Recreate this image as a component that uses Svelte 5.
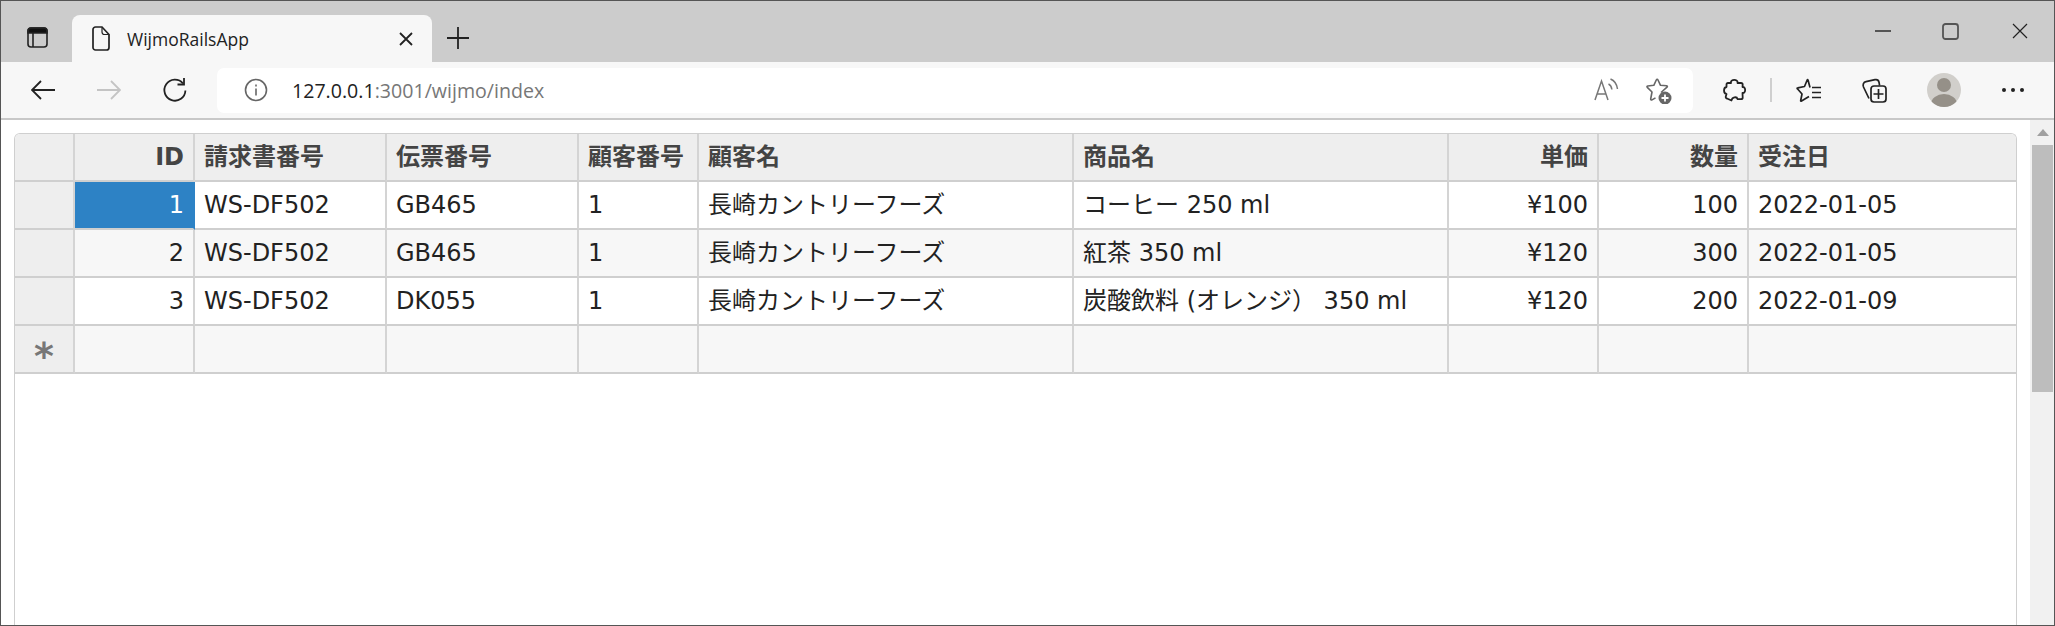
<script>
  const columns = [
    { key: "id", label: "ID", w: 120, right: true },
    { key: "invoice", label: "請求書番号", w: 192 },
    { key: "slip", label: "伝票番号", w: 192 },
    { key: "custNo", label: "顧客番号", w: 120 },
    { key: "cust", label: "顧客名", w: 375 },
    { key: "item", label: "商品名", w: 375 },
    { key: "price", label: "単価", w: 150, right: true },
    { key: "qty", label: "数量", w: 150, right: true },
    { key: "date", label: "受注日", w: 269 },
  ]

  const rows = [
    { id: "1", invoice: "WS-DF502", slip: "GB465", custNo: "1", cust: "長崎カントリーフーズ", item: "コーヒー 250 ml", price: "¥100", qty: "100", date: "2022-01-05" },
    { id: "2", invoice: "WS-DF502", slip: "GB465", custNo: "1", cust: "長崎カントリーフーズ", item: "紅茶 350 ml", price: "¥120", qty: "300", date: "2022-01-05" },
    { id: "3", invoice: "WS-DF502", slip: "DK055", custNo: "1", cust: "長崎カントリーフーズ", item: "炭酸飲料 (オレンジ） 350 ml", price: "¥120", qty: "200", date: "2022-01-09" },
  ]

  const template = "60px " + columns.map((c) => c.w + "px").join(" ")
</script>

<div class="window">
  <div class="tabstrip">
    <svg class="tabs-icon" width="21" height="21" viewBox="0 0 21 21" fill="none" stroke="#222" stroke-width="1.6">
      <path d="M1 6V4a3 3 0 0 1 3-3h13a3 3 0 0 1 3 3v2z" fill="#111" />
      <rect x="1" y="1" width="19" height="19" rx="3" />
      <path d="M6 6v14" />
    </svg>
    <div class="tab">
      <svg width="18" height="25" viewBox="0 0 18 25" fill="none" stroke="#222" stroke-width="1.7">
        <path d="M3.500 1h6.500l7 7.500V21.500a2.500 2.500 0 0 1-2.500 2.500h-11A2.500 2.500 0 0 1 1 21.500V3.500A2.500 2.500 0 0 1 3.500 1z" />
        <path d="M10 1.500V6a2.500 2.500 0 0 0 2.500 2.500H16.500" stroke-width="1.2" />
      </svg>
      <span class="tab-title">WijmoRailsApp</span>
      <svg class="tab-close" width="14" height="14" viewBox="0 0 14 14" stroke="#222" stroke-width="1.8">
        <path d="M1 1l12 12M13 1L1 13" />
      </svg>
    </div>
    <svg class="new-tab" width="22" height="22" viewBox="0 0 22 22" stroke="#222" stroke-width="1.8">
      <path d="M11 0v22M0 11h22" />
    </svg>
    <div class="caption">
      <svg width="16" height="2" viewBox="0 0 16 2" stroke="#222" stroke-width="1.4"><path d="M0 1h16" /></svg>
      <svg class="cap-max" width="17" height="17" viewBox="0 0 17 17" fill="none" stroke="#555" stroke-width="1.8"><rect x="1" y="1" width="15" height="15" rx="2.500" /></svg>
      <svg class="cap-close" width="16" height="16" viewBox="0 0 16 16" stroke="#222" stroke-width="1.2"><path d="M1 1l14 14M15 1L1 15" /></svg>
    </div>
  </div>

  <div class="toolbar">
    <svg class="back" width="24" height="20" viewBox="0 0 24 20" fill="none" stroke="#222" stroke-width="1.8">
      <path d="M24 10H1M10 1l-9 9 9 9" />
    </svg>
    <svg class="forward" width="24" height="20" viewBox="0 0 24 20" fill="none" stroke="#c4c4c4" stroke-width="1.8">
      <path d="M0 10h23M14 1l9 9-9 9" />
    </svg>
    <svg class="reload" width="25" height="25" viewBox="0 0 25 25" fill="none" stroke="#222" stroke-width="1.8">
      <path d="M21 5.500A10.500 10.500 0 1 0 23.400 12.500" />
      <path d="M22 0v6.500h-6.500" />
    </svg>
    <div class="address">
      <svg class="info" width="24" height="24" viewBox="0 0 24 24" fill="none" stroke="#666" stroke-width="1.600">
        <circle cx="12" cy="12" r="10.500" />
        <path d="M12 10.500v7M12 6.500v2" />
      </svg>
      <span class="url"><b>127.0.0.1</b>:3001/wijmo/index</span>
      <svg class="read" width="25" height="24" viewBox="0 0 25 24" fill="none" stroke="#777" stroke-width="1.500">
        <path d="M1 23L7.500 4 14 23M3.200 17h8.600" />
        <path d="M14.500 7c1.800.9 3 2.700 3.400 5.500M16.500 2c3.800 1.500 6.300 5 7 10" />
      </svg>
      <svg class="fav-add" width="26" height="26" viewBox="0 0 26 26" fill="none" stroke="#666" stroke-width="1.600" stroke-linejoin="round">
        <path d="M15 14.500l6-5.300c.6-.5.3-1.300-.5-1.400L14.500 7.300 12 2c-.4-.8-1.300-.8-1.700 0L7.800 7.300 1.800 8c-.8.100-1.100.9-.5 1.400L6 14l-1.300 7c-.1.800.6 1.300 1.300.9l3.500-2" />
        <circle cx="19" cy="20" r="6.500" fill="#666" stroke="none" />
        <path d="M19 16.500v7M15.500 20h7" stroke="#fff" stroke-width="1.800" />
      </svg>
    </div>
    <svg class="puzzle" width="23" height="24" viewBox="0 0 23 24" fill="none" stroke="#222" stroke-width="1.800" stroke-linejoin="round">
      <path d="M8 5C7 .8 15.500 .8 14.500 5L18 5c1 0 1.700.7 1.700 1.700L19.500 9c3.500-.5 3.500 6.500 0 6L19.700 19.500c0 1-.7 1.700-1.700 1.700L14.500 21c-.5-2.500-5.500-2.500-6 1.500L4 20.500c-1-.2-1.500-1-1.200-2L3.500 16C.2 15.500 .2 9.500 3.500 9L3.500 6.500C3.500 5.500 4 5 5 5z" />
    </svg>
    <div class="sep"></div>
    <svg class="fav-list" width="25" height="24" viewBox="0 0 25 24" fill="none" stroke="#222" stroke-width="1.700" stroke-linejoin="round">
      <path d="M14 9.500L12 2c-.1-.5-.6-.5-.8 0L8.500 8.500 1.800 9.800c-.6.100-.8.600-.4 1L6 16 4.700 22.500c-.1.600.3.800.8.500L13 18.500" />
      <path d="M16 9.500h9M16 14.500h9M16 19.500h9" />
    </svg>
    <svg class="collections" width="26" height="25" viewBox="0 0 26 25" fill="none" stroke="#222" stroke-width="1.700">
      <path d="M8 20.500L2.500 9C1.500 6.500 2.500 4.200 5 3.700L14 1.700C16 1.300 17.600 2.300 18 4.200L18.600 7.500" />
      <rect x="10" y="8" width="15" height="16" rx="3" />
      <path d="M17.500 11v10M12.500 16h10" />
    </svg>
    <svg class="avatar" width="34" height="34" viewBox="0 0 34 34">
      <clipPath id="avatar-clip"><circle cx="17" cy="17" r="17" /></clipPath>
      <circle cx="17" cy="17" r="17" fill="#d1cfcb" />
      <g clip-path="url(#avatar-clip)" fill="#959088">
        <circle cx="17" cy="12" r="7" />
        <ellipse cx="17" cy="31" rx="13" ry="10" />
      </g>
    </svg>
    <div class="more"><i></i><i></i><i></i></div>
  </div>

  <div class="content">
    <div class="page">
      <div class="grid" style="grid-template-columns: {template}">
        <div class="cell corner"></div>
        {#each columns as col}
          <div class="cell head" class:right={col.right}>{col.label}</div>
        {/each}

        {#each rows as row, i}
          <div class="cell rowhead"></div>
          {#each columns as col}
            <div
              class="cell"
              class:alt={i % 2 === 1}
              class:right={col.right}
              class:selected={i === 0 && col.key === "id"}
            >{row[col.key]}</div>
          {/each}
        {/each}

        <div class="cell rowhead star">*</div>
        {#each columns as col}
          <div class="cell alt"></div>
        {/each}
      </div>
    </div>
    <div class="scrollbar">
      <div class="arrow"></div>
      <div class="thumb"></div>
    </div>
  </div>
</div>

<style>
  :global(body) {
    margin: 0;
    background: #fff;
  }

  .window {
    box-sizing: border-box;
    width: 2055px;
    height: 626px;
    display: flex;
    flex-direction: column;
    border: 1px solid #555;
    overflow: hidden;
    font-family: "Open Sans", "Noto Sans CJK JP", sans-serif;
  }

  .tabstrip {
    height: 61px;
    flex: none;
    display: flex;
    align-items: flex-start;
    background: #cccccc;
  }

  .tabs-icon {
    margin: 26px 24px 0 26px;
  }

  .tab {
    width: 360px;
    height: 47px;
    margin-top: 14px;
    box-sizing: border-box;
    padding-left: 20px;
    display: flex;
    align-items: center;
    background: #f7f7f7;
    border-radius: 8px 8px 0 0;
  }

  .tab-title {
    margin-left: 17px;
    font-size: 17.5px;
    color: #222;
    flex: 1;
  }

  .tab-close {
    margin-right: 19px;
  }

  .new-tab {
    margin: 26px 0 0 15px;
  }

  .caption {
    margin-left: auto;
    display: flex;
    align-items: center;
    height: 16px;
    margin-top: 22px;
    margin-right: 26px;
  }

  .cap-max {
    margin-left: 51px;
  }

  .cap-close {
    margin-left: 53px;
  }

  .toolbar {
    height: 58px;
    flex: none;
    box-sizing: border-box;
    display: flex;
    align-items: center;
    background: #f7f7f7;
    border-bottom: 2px solid #c8c8c8;
  }

  .back {
    margin-left: 30px;
  }

  .forward {
    margin-left: 42px;
  }

  .reload {
    margin-left: 41px;
  }

  .address {
    width: 1476px;
    height: 45px;
    margin-left: 30px;
    box-sizing: border-box;
    display: flex;
    align-items: center;
    background: #fff;
    border-radius: 7px;
  }

  .info {
    margin-left: 27px;
  }

  .url {
    margin-left: 24px;
    flex: 1;
    font-size: 19.600px;
    color: #777;
  }

  .url b {
    font-weight: 400;
    color: #222;
  }

  .read {
    margin-bottom: 2px;
  }

  .fav-add {
    margin: 2px 21px 0 27px;
  }

  .puzzle {
    margin-left: 30px;
  }

  .sep {
    width: 2px;
    height: 24px;
    margin-left: 24px;
    background: #cfcfcf;
  }

  .fav-list {
    margin-left: 24px;
  }

  .collections {
    margin-left: 40px;
  }

  .avatar {
    margin-left: 40px;
  }

  .more {
    margin-left: 41px;
    display: flex;
    gap: 5px;
  }

  .more i {
    width: 4px;
    height: 4px;
    border-radius: 50%;
    background: #222;
  }

  .content {
    flex: 1;
    min-height: 0;
    display: flex;
  }

  .page {
    flex: 1;
    min-width: 0;
    padding: 13px 0 0 13px;
    background: #fff;
  }

  .grid {
    display: grid;
    width: 2003px;
    height: 100%;
    grid-auto-rows: 48px;
    box-sizing: border-box;
    border: 1px solid #cfcfcf;
    border-bottom: none;
    border-radius: 6px 6px 0 0;
    overflow: hidden;
    font-family: "DejaVu Sans", "Noto Sans CJK JP", sans-serif;
    font-size: 24px;
    line-height: 30px;
    color: #222;
  }

  .cell {
    box-sizing: border-box;
    padding: 0 9px;
    display: flex;
    align-items: center;
    white-space: pre;
    background: #fff;
    border-right: 2px solid #d4d4d4;
    border-bottom: 2px solid #cfcfcf;
  }

  .cell:nth-child(10n) {
    border-right: none;
  }

  .right {
    justify-content: flex-end;
  }

  .alt {
    background: #f7f7f7;
  }

  .head,
  .corner,
  .rowhead {
    background: #eeeeee;
    color: #444;
    font-weight: 700;
  }

  .selected {
    background: #2d82c5;
    border-right-color: #2d82c5;
    color: #fff;
  }

  .star {
    justify-content: center;
    font-size: 38px;
    color: #777;
    padding-top: 14px;
  }

  .scrollbar {
    width: 24px;
    margin-left: 13px;
    flex: none;
    box-sizing: border-box;
    padding: 0 1px 0 2px;
    background: #f1f1f1;
  }

  .arrow {
    height: 25px;
    display: flex;
    justify-content: center;
  }

  .arrow::before {
    content: "";
    margin-top: 9px;
    border: 6px solid transparent;
    border-top: none;
    border-bottom: 7px solid #a0a0a0;
    height: 0;
  }

  .thumb {
    height: 247px;
    background: #bdbdbd;
  }
</style>
